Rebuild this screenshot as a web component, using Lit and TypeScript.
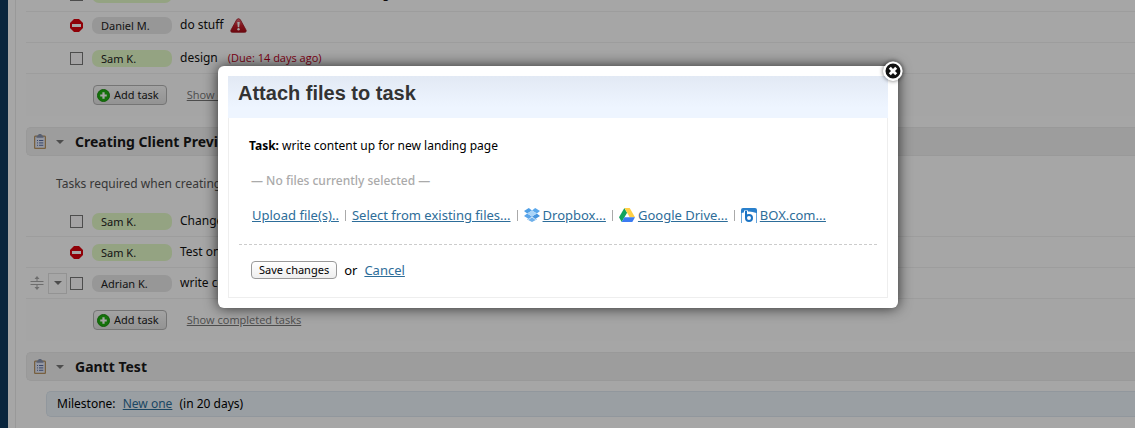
import { LitElement, html, css } from "lit";
import { customElement, property } from "lit/decorators.js";

type Task = {
  who: string;
  text: string;
  mine?: boolean;
  blocked?: boolean;
  raised?: boolean;
  alert?: boolean;
  due?: string;
  active?: boolean;
};

const before: Task[] = [
  { who: "Sam K.", text: "add the new contact form to the blog", mine: true, raised: true },
  { who: "Daniel M.", text: "do stuff", blocked: true, raised: true, alert: true },
  { who: "Sam K.", text: "design", mine: true, due: "(Due: 14 days ago)" },
];

const preview: Task[] = [
  { who: "Sam K.", text: "Change the header", mine: true },
  { who: "Sam K.", text: "Test on mobile", mine: true, blocked: true },
  { who: "Adrian K.", text: "write content up for new landing page", active: true },
];

const stopIcon = html`<svg width="13" height="13" viewBox="0 0 13 13" aria-label="Blocked">
  <path d="M4 0H9L13 4V9L9 13H4L0 9V4Z" fill="#dc000c" />
  <rect x="2" y="5" width="9" height="3" fill="#fff" />
</svg>`;

const alertIcon = html`<svg width="17" height="15" viewBox="0 0 17 15" aria-label="Alert">
  <defs><linearGradient id="r" x1="0" y1="0" x2="0" y2="1">
    <stop offset="0" stop-color="#e8707c" /><stop offset="0.5" stop-color="#c8202c" /><stop offset="1" stop-color="#a80c18" />
  </linearGradient></defs>
  <path d="M8.500 .7C9.400 .7 10 1.200 10.500 2L16 12C16.600 13.300 16 14.300 14.700 14.300H2.300C1 14.300 .4 13.300 1 12L6.500 2C7 1.200 7.600 .7 8.500 .7Z" fill="url(#r)" stroke="#a01420" stroke-width=".8" />
  <path d="M7.300 4H9.700L9.200 9.300H7.800Z" fill="#fff" /><circle cx="8.500" cy="11.300" r="1.200" fill="#fff" />
</svg>`;

const plusIcon = html`<svg width="13" height="13" viewBox="0 0 14 14" aria-hidden="true">
  <circle cx="7" cy="7" r="6.500" fill="#1fb010" stroke="#168a0a" />
  <path d="M7 3.500V10.500M3.500 7H10.500" stroke="#fff" stroke-width="2.400" />
</svg>`;

const clipboardIcon = html`<svg width="12" height="15" viewBox="0 0 12 15" aria-hidden="true">
  <rect x=".6" y="2.200" width="10.800" height="12.200" rx="1" fill="#e4eafa" stroke="#b89462" stroke-width="1.300" />
  <path d="M2.500 3.800V2.200C2.500 1.600 3 1.500 4 1.400C4.200 .4 5 0 6 0S7.800 .4 8 1.400C9 1.500 9.500 1.600 9.500 2.200V3.800Z" fill="#8793ae" />
  <path d="M3 6.500H4M5 6.500H9.300M3 8.900H4M5 8.900H9.300M3 11.300H4M5 11.300H9.300" stroke="#5a6ea4" stroke-width="1" />
</svg>`;

const moveIcon = html`<svg width="14" height="14" viewBox="0 0 14 14" aria-hidden="true">
  <path d="M.5 5.500H13.500M.5 8.500H13.500M7 1.500V5M7 9V12.500" stroke="#a8a8a8" />
  <path d="M4.500 3L7 0L9.500 3ZM4.500 11L7 14L9.500 11Z" fill="#a8a8a8" />
</svg>`;

const arrow = html`<svg width="8" height="4" viewBox="0 0 8 4" aria-hidden="true"><path d="M0 0H8L4 4Z" fill="#777" /></svg>`;

const dropboxIcon = html`<svg width="16" height="14" viewBox="0 0 16 14" aria-hidden="true">
  <path d="M4.800 0L8 2.600L3.200 5.500L0 3Z" fill="#4f9fe6" />
  <path d="M11.200 0L16 3L12.800 5.500L8 2.600Z" fill="#5aa8ec" />
  <path d="M3.200 5.500L8 8.500L4.800 11L0 8.100Z" fill="#5ba5ea" />
  <path d="M12.800 5.500L16 8.100L11.200 11L8 8.500Z" fill="#4795de" />
  <path d="M8 2.600L12.800 5.500L8 8.500L3.200 5.500Z" fill="#a9d4f8" />
  <path d="M3.200 10.700L4.800 11.700L8 9.200L11.200 11.700L12.800 10.700V11.400L8 14L3.200 11.400Z" fill="#6fb0ea" />
</svg>`;

const driveIcon = html`<svg width="16" height="14" viewBox="0 0 16 14" aria-hidden="true">
  <path d="M5.400 0L8.100 4.700L2.700 14L0 9.300Z" fill="#11a45c" />
  <path d="M5.400 0H10.700L16 9.300H10.700Z" fill="#ffcf46" />
  <path d="M5.400 9.300H16L13.300 14H2.700Z" fill="#3b7bf2" />
</svg>`;

const boxIcon = html`<svg width="16" height="15" viewBox="0 0 16 15" aria-hidden="true">
  <path d="M0 15V2Q0 0 2 0H14Q16 0 16 2V15H15.300V5Q8 2 .7 5V15Z" fill="#2a80cc" />
  <path d="M5 2.500V10" stroke="#fff" stroke-width="4" />
  <circle cx="8" cy="9.900" r="5" fill="#fff" />
  <path d="M5 3V10" stroke="#1c74c4" stroke-width="2" />
  <circle cx="8" cy="9.900" r="3" fill="#fff" stroke="#1c74c4" stroke-width="2" />
</svg>`;

const closeIcon = html`<svg width="20" height="20" viewBox="0 0 20 20" aria-hidden="true">
  <circle cx="10" cy="10" r="8.500" fill="#111" stroke="#fff" stroke-width="2" />
  <path d="M6.800 6.800L13.200 13.200M13.200 6.800L6.800 13.200" stroke="#fff" stroke-width="2.800" />
</svg>`;

const shared = css`
  * { box-sizing: border-box; }
  svg { display: block; flex: none; }
  button { font: inherit; color: inherit; margin: 0; cursor: pointer; }
  a { color: #2d6d99; }
`;

@customElement("task-row")
class TaskRow extends LitElement {
  @property({ attribute: false }) task!: Task;

  static styles = [shared, css`
    :host { display: block; }
    .row {
      display: grid;
      grid-template-columns: 15px 19px 13px 86px 1fr;
      column-gap: 3px;
      align-items: center;
      height: 31px;
      padding-left: 4px;
      border-bottom: 1px solid #f2f2f2;
      white-space: nowrap;
    }
    .row.raised { padding-bottom: 4px; }
    .menu {
      display: grid;
      place-items: center;
      width: 19px;
      height: 21px;
      padding: 0;
      border: 1px solid #e2e2e2;
      background: transparent;
    }
    .tick {
      appearance: none;
      width: 13px;
      height: 13px;
      margin: 0;
      border: 1px solid #777;
      background: #fcfafc;
    }
    .who {
      margin-left: 6px;
      height: 17px;
      padding-left: 9px;
      border-radius: 7px;
      background: #e8e8e8;
      font-size: 11px;
      line-height: 17px;
      color: #222;
    }
    .who.mine { background: #e4fac8; }
    .what { display: flex; align-items: center; gap: 6px; padding-left: 5px; color: #111; }
    .due { font: 11px/16px "Open Sans", sans-serif; color: #c0001c; padding-left: 4px; }
  `];

  render() {
    const t = this.task;
    return html`<div class="row ${t.raised ? "raised" : ""}">
      <span>${t.active ? moveIcon : ""}</span>
      ${t.active ? html`<button class="menu" aria-label="Task menu">${arrow}</button>` : html`<span></span>`}
      ${t.blocked ? stopIcon : html`<input class="tick" type="checkbox" aria-label=${t.text} />`}
      <span class="who ${t.mine ? "mine" : ""}">${t.who}</span>
      <span class="what">${t.text}${t.alert ? alertIcon : ""}${t.due ? html`<span class="due">${t.due}</span>` : ""}</span>
    </div>`;
  }
}

@customElement("task-group")
class TaskGroup extends LitElement {
  @property({ attribute: false }) tasks: Task[] = [];

  static styles = [shared, css`
    :host { display: block; }
    .foot { display: flex; align-items: center; gap: 20px; height: 42px; padding-left: 67px; background: #fdfdfd; }
    .add {
      display: flex;
      align-items: center;
      gap: 4px;
      height: 20px;
      padding: 0 7px 0 3px;
      border: 1px solid #b4b4b4;
      border-radius: 4px;
      background: linear-gradient(#fafafa, #e2e2e2);
      font-size: 11px;
      color: #222;
    }
    .completed { font: 11px/16px "Open Sans", sans-serif; color: #777; }
  `];

  render() {
    return html`${this.tasks.map((t) => html`<task-row .task=${t}></task-row>`)}
      <div class="foot">
        <button class="add">${plusIcon}Add task</button>
        <a class="completed" href="#">Show completed tasks</a>
      </div>`;
  }
}

@customElement("section-title")
class SectionTitle extends LitElement {
  static styles = [shared, css`
    :host { display: block; }
    .bar {
      display: flex;
      align-items: center;
      height: 29px;
      padding-left: 7px;
      border: 1px solid #ebebeb;
      border-right: 0;
      border-radius: 5px 0 0 5px;
      background: #f1f1f1;
    }
    .toggle { display: grid; place-items: center; width: 18px; height: 19px; margin: 0 6px 0 5px; padding: 0; border: 0; background: transparent; }
    h2 { margin: 0; font-size: 14px; line-height: 20px; color: #1a1a1a; white-space: nowrap; }
  `];

  render() {
    return html`<div class="bar">
      ${clipboardIcon}<button class="toggle" aria-label="Toggle list">${arrow}</button>
      <h2><slot></slot></h2>
    </div>`;
  }
}

@customElement("attach-dialog")
class AttachDialog extends LitElement {
  static styles = [shared, css`
    :host { display: block; position: relative; width: 680px; max-width: 100%; }
    .frame { padding: 10px; border-radius: 6px; background: #fff; box-shadow: 0 0 14px rgba(0, 0, 0, 0.75); }
    .inner { border: 1px solid #eee; border-top: 0; }
    h1 {
      margin: 0 -1px;
      height: 42px;
      padding-left: 10px;
      background: linear-gradient(#e2e9f4, #eef5ff 75%);
      font: bold 20px/34px "Liberation Sans", Arial, sans-serif;
      color: #333;
    }
    .body { padding: 18px 10px 17px; }
    p { margin: 0; line-height: 20px; }
    .task { padding-left: 10px; }
    .none { margin-top: 15px; padding-left: 12px; font-weight: 500; color: #aaa; }
    .sources { display: flex; flex-wrap: wrap; align-items: center; gap: 6px; margin-top: 14px; padding-left: 13px; font-size: 13px; line-height: 20px; }
    .source { display: flex; align-items: center; gap: 3px; }
    .sep { width: 1px; height: 11px; background: #aaa; }
    hr { margin: 19px 0 15px; border: 0; border-top: 1px dashed #ccc; }
    .actions { display: flex; align-items: center; gap: 7px; padding-left: 12px; font-size: 13px; line-height: 20px; }
    .save {
      height: 18px;
      padding: 0 7px;
      border: 1px solid #999;
      border-radius: 4px;
      background: linear-gradient(#fff, #eee);
      font-size: 11px;
      line-height: 14px;
      color: #000;
    }
    .close { position: absolute; top: -5px; right: -5px; padding: 0; border: 0; border-radius: 50%; background: transparent; box-shadow: 0 0 4px rgba(0, 0, 0, 0.6); }
  `];

  render() {
    return html`<div class="frame" role="dialog" aria-label="Attach files to task">
        <div class="inner">
          <h1>Attach files to task</h1>
          <div class="body">
            <p class="task"><b>Task:</b> write content up for new landing page</p>
            <p class="none">— No files currently selected —</p>
            <div class="sources">
              <a href="#">Upload file(s)..</a><span class="sep"></span>
              <a href="#">Select from existing files...</a><span class="sep"></span>
              <span class="source">${dropboxIcon}<a href="#">Dropbox...</a></span><span class="sep"></span>
              <span class="source">${driveIcon}<a href="#">Google Drive...</a></span><span class="sep"></span>
              <span class="source">${boxIcon}<a href="#">BOX.com...</a></span>
            </div>
            <hr />
            <div class="actions"><button class="save">Save changes</button><span>or</span><a href="#">Cancel</a></div>
          </div>
        </div>
      </div>
      <button class="close" aria-label="Close">${closeIcon}</button>`;
  }
}

@customElement("app-root")
class AppRoot extends LitElement {
  static styles = [shared, css`
    :host {
      display: block;
      position: relative;
      overflow: hidden;
      font: 12px/16px "Noto Sans", "Open Sans", sans-serif;
      color: #000;
    }
    .page { display: flex; min-height: 100vh; background: #0f395e; padding-left: 8px; }
    .paper { flex: 1; min-width: 0; padding-left: 7px; background: #fff; }
    .lists { height: 100%; padding-left: 10px; border-left: 1px solid #ececec; overflow: hidden; }
    .scrolled { margin-top: -19px; }
    section-title { margin-top: 11px; }
    .note { margin: 19px 0 13px; padding-left: 30px; line-height: 18px; color: #555; }
    .milestone {
      margin: 10px 0 10px 20px;
      padding: 4px 10px;
      border: 1px solid #dfe9f2;
      border-right: 0;
      border-radius: 5px 0 0 5px;
      background: #edf5fb;
      line-height: 16px;
    }
    .milestone a { margin: 0 4px; }
    .shade { position: absolute; inset: 0; padding: 66px 19px 20px 0; background: rgba(0, 0, 0, 0.35); }
    attach-dialog { margin: 0 auto; }
  `];

  render() {
    return html`<div class="page">
        <main class="paper">
          <div class="lists">
            <task-group class="scrolled" .tasks=${before}></task-group>
            <section-title>Creating Client Preview</section-title>
            <p class="note">Tasks required when creating a client preview</p>
            <task-group .tasks=${preview}></task-group>
            <section-title>Gantt Test</section-title>
            <div class="milestone">Milestone: <a href="#">New one</a> (in 20 days)</div>
          </div>
        </main>
      </div>
      <div class="shade"><attach-dialog></attach-dialog></div>`;
  }
}
